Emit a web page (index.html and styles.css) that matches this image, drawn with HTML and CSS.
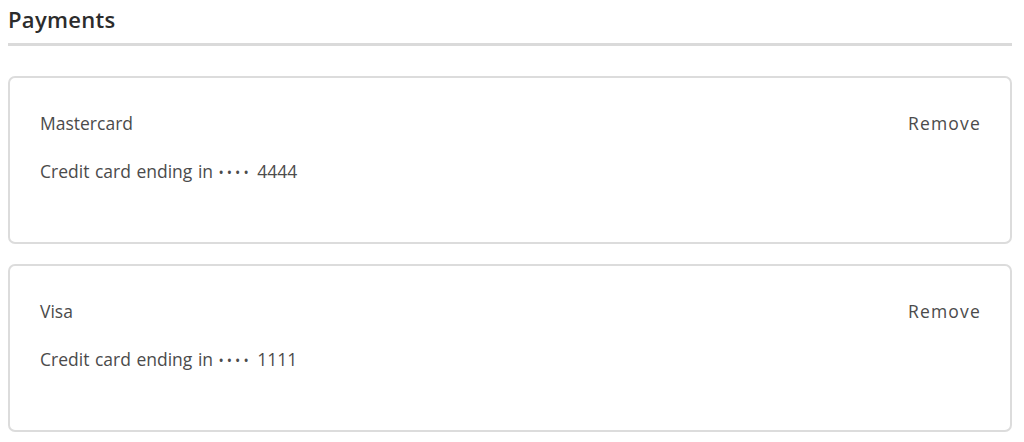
FILE: index.html
```html
<!DOCTYPE html>
<html lang="en">
<head>
<meta charset="utf-8">
<title>Payments</title>
<link rel="stylesheet" href="styles.css">
</head>
<body>
<main class="page">
  <h2 class="title">Payments</h2>
  <ul class="cards">
    <li class="card">
      <div class="card-head">
        <span class="brand">Mastercard</span>
        <a class="remove" href="#">Remove</a>
      </div>
      <p class="desc">Credit card ending in <span class="dots">••••</span> 4444</p>
    </li>
    <li class="card">
      <div class="card-head">
        <span class="brand">Visa</span>
        <a class="remove" href="#">Remove</a>
      </div>
      <p class="desc">Credit card ending in <span class="dots">••••</span> 1111</p>
    </li>
  </ul>
</main>
</body>
</html>
```
FILE: styles.css
```css
html, body {
  margin: 0;
  padding: 0;
  background: #ffffff;
}
body {
  font-family: "Open Sans", "Liberation Sans", sans-serif;
  color: #4b4b4b;
}
.page {
  padding: 0 12px 0 8px;
}
.title {
  margin: 0;
  padding-top: 4px;
  height: 39px;
  font-size: 22px;
  line-height: 30px;
  font-weight: 600;
  letter-spacing: 0.3px;
  color: #2c2c2c;
  border-bottom: 3px solid #dadada;
  box-sizing: content-box;
}
.cards {
  list-style: none;
  margin: 30px 0 0;
  padding: 0;
  display: flex;
  flex-direction: column;
  gap: 20px;
}
.card {
  border: 2px solid #dcdcdc;
  border-radius: 7px;
  padding: 33px 30px 59px 30px;
  display: flex;
  flex-direction: column;
  gap: 24px;
}
.card-head {
  display: flex;
  justify-content: space-between;
  align-items: center;
  height: 24px;
}
.brand {
  font-size: 17.5px;
  line-height: 24px;
}
.remove {
  font-size: 17.5px;
  line-height: 24px;
  letter-spacing: 1.2px;
  margin-right: -1px;
  color: #4b4b4b;
  text-decoration: none;
}
.desc {
  margin: 0;
  height: 24px;
  font-size: 17.5px;
  line-height: 24px;
  word-spacing: 1px;
}
.dots {
  font-size: 14px;
  line-height: 0;
  letter-spacing: 3px;
}
```
